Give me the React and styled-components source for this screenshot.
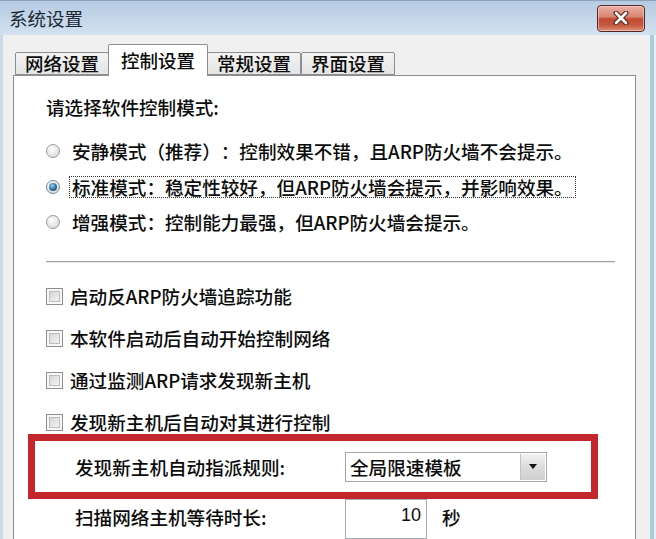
import React from 'react';
import styled, { createGlobalStyle } from 'styled-components';

const GlobalStyle = createGlobalStyle`
  html, body { margin: 0; padding: 0; background: #ffffff; }
  body {
    font-family: "Liberation Sans Narrow", "Noto Sans CJK SC", "Noto Sans", sans-serif;
    color: #0c0c0c;
    text-spacing-trim: space-all;
  }
  * { box-sizing: border-box; }
`;

const Window = styled.div`
  width: 656px;
  height: 539px;
  overflow: hidden;
  display: flex;
  flex-direction: column;
`;

const TitleBar = styled.div`
  height: 35px;
  flex: none;
  display: flex;
  align-items: center;
  justify-content: space-between;
  padding: 0 11px 0 9px;
  background: linear-gradient(#b6cae2, #c6d7ea 55%, #d3e1f0);
  border-top: 1px solid #8da2bb;
`;

const Title = styled.span`
  font-size: 18.5px;
  line-height: 26px;
  color: #1b2733;
`;

const CloseButton = styled.div`
  width: 48px;
  height: 27px;
  border: 1px solid #4d2a28;
  border-radius: 4px;
  display: flex;
  align-items: center;
  justify-content: center;
  background: linear-gradient(#eab0a3 0%, #d98672 42%, #c24a33 52%, #c65a42 78%, #e0927a 100%);
  box-shadow: inset 0 0 0 1px rgba(255, 220, 210, 0.55);
`;

const Body = styled.div`
  flex: 1;
  display: flex;
  min-height: 0;
`;

const FrameLeft = styled.div`
  width: 3px;
  background: #cbd9ea;
`;

const FrameRight = styled.div`
  width: 6px;
  background: linear-gradient(to right, #a7cedc 0 4px, #e6f1f6 4px);
`;

const Client = styled.div`
  flex: 1;
  display: flex;
  flex-direction: column;
  background: #f0f0f0;
  padding: 0 14px 0 10px;
  min-height: 0;
`;

const TabStrip = styled.div`
  height: 40px;
  flex: none;
  display: flex;
  align-items: flex-end;
  padding-left: 2px;
  position: relative;
  z-index: 2;
`;

const Tab = styled.div`
  height: ${(p) => (p.$active ? '32px' : '23px')};
  margin: ${(p) => (p.$active ? '0 -1px -1px -1px' : '0')};
  padding: ${(p) => (p.$active ? '0 12px' : '0 9px')};
  border: 1px solid #8c8e94;
  border-bottom: ${(p) => (p.$active ? 'none' : '1px solid #8c8e94')};
  border-radius: 2px 2px 0 0;
  background: ${(p) => (p.$active ? '#ffffff' : 'linear-gradient(#f3f3f3, #e4e4e4)')};
  font-size: 18.5px;
  font-weight: 500;
  line-height: ${(p) => (p.$active ? '30px' : '21px')};
  white-space: nowrap;
  position: relative;
  z-index: ${(p) => (p.$active ? 2 : 1)};
`;

const Panel = styled.div`
  flex: 1;
  min-height: 0;
  overflow: hidden;
  background: #ffffff;
  border: 1px solid #8c8e94;
  border-bottom: none;
  padding: 16px 20px 0 32px;
  display: flex;
  flex-direction: column;
  font-size: 18.6px;
  font-weight: 500;
`;

const Heading = styled.div`
  line-height: 30px;
  margin-bottom: 11px;
  white-space: nowrap;
`;

const RadioRow = styled.div`
  height: 36px;
  display: flex;
  align-items: center;
`;

const RadioCircle = styled.span`
  width: 14px;
  height: 14px;
  flex: none;
  border-radius: 50%;
  border: 1px solid ${(p) => (p.$checked ? '#6f8aa3' : '#9a9a9a')};
  background: radial-gradient(circle at 40% 35%, #ffffff 0%, #e6e6e6 55%, #c9c9c9 100%);
  margin-right: 9px;
  display: flex;
  align-items: center;
  justify-content: center;
  &::after {
    content: '';
    display: ${(p) => (p.$checked ? 'block' : 'none')};
    width: 8px;
    height: 8px;
    border-radius: 50%;
    background: radial-gradient(circle at 40% 35%, #9fd0f0 0%, #2a6b9c 55%, #0f3a62 100%);
  }
`;

const OptionText = styled.span`
  line-height: 20px;
  padding: 0 2px;
  border: 1px dotted ${(p) => (p.$focused ? '#333' : 'transparent')};
  white-space: nowrap;
`;

const Separator = styled.div`
  margin-top: 21px;
  height: 2px;
  flex: none;
  border-top: 1px solid #a2a2a2;
  border-bottom: 1px solid #e6e6e6;
`;

const CheckList = styled.div`
  margin-top: 12px;
  display: flex;
  flex-direction: column;
`;

const CheckRow = styled.div`
  height: 42px;
  display: flex;
  align-items: center;
`;

const CheckBox = styled.span`
  width: 17px;
  height: 17px;
  flex: none;
  border: 1px solid #8e8f8f;
  background: linear-gradient(135deg, #cdcdcd, #eeeeee 70%, #f6f6f6);
  box-shadow: inset 0 0 0 2px #f8f8f8, inset 0 0 0 3px #b9bcc0;
  margin-right: 7px;
`;

const CheckText = styled.span`
  line-height: 24px;
  white-space: nowrap;
`;

const RuleBox = styled.div`
  position: relative;
  z-index: 1;
  margin: -9px 0 0 -18px;
  width: 570px;
  height: 65px;
  flex: none;
  border: 7px solid #c4262e;
  display: flex;
  align-items: center;
  padding-left: 40px;
`;

const SettingRow = styled.div`
  height: 40px;
  flex: none;
  display: flex;
  align-items: flex-start;
  padding-left: 29px;
`;

const FieldLabel = styled.span`
  width: 270px;
  flex: none;
  line-height: ${(p) => (p.$tall ? '36px' : '30px')};
  white-space: nowrap;
`;

const Select = styled.div`
  width: 202px;
  height: 30px;
  border: 1px solid #a3a6ab;
  background: #fff;
  display: flex;
`;

const SelectValue = styled.span`
  flex: 1;
  line-height: 28px;
  padding-left: 4px;
  white-space: nowrap;
`;

const SelectArrow = styled.span`
  width: 25px;
  flex: none;
  border-left: 1px solid #c3c3c3;
  margin: 1px;
  background: linear-gradient(#f2f2f2, #dcdcdc 50%, #cfcfcf);
  display: flex;
  align-items: center;
  justify-content: center;
  &::after {
    content: '';
    width: 0;
    height: 0;
    border-left: 4px solid transparent;
    border-right: 4px solid transparent;
    border-top: 5px solid #111;
  }
`;

const NumberBox = styled.div`
  width: 82px;
  height: 40px;
  flex: none;
  border: 1px solid #a5acb5;
  background: #fff;
  text-align: right;
  padding-right: 5px;
  font-family: "Liberation Sans", "Noto Sans", sans-serif;
  font-weight: 400;
  font-size: 18px;
  line-height: 30px;
`;

const Unit = styled.span`
  margin-left: 15px;
  line-height: 36px;
`;

const CloseIcon = () => (
  <svg width="18" height="14" viewBox="0 0 18 14">
    <path d="M4 2 L14 12 M14 2 L4 12" stroke="#5b2b22" strokeWidth="5" strokeLinecap="round" />
    <path d="M4 2 L14 12 M14 2 L4 12" stroke="#ffffff" strokeWidth="2.6" strokeLinecap="round" />
  </svg>
);

const tabs = ['网络设置', '控制设置', '常规设置', '界面设置'];

const radios = [
  { text: '安静模式（推荐）：控制效果不错，且ARP防火墙不会提示。' },
  { text: '标准模式：稳定性较好，但ARP防火墙会提示，并影响效果。', checked: true },
  { text: '增强模式：控制能力最强，但ARP防火墙会提示。' },
];

const checks = [
  '启动反ARP防火墙追踪功能',
  '本软件启动后自动开始控制网络',
  '通过监测ARP请求发现新主机',
  '发现新主机后自动对其进行控制',
];

export default function App() {
  return (
    <>
      <GlobalStyle />
      <Window>
        <TitleBar>
          <Title>系统设置</Title>
          <CloseButton>
            <CloseIcon />
          </CloseButton>
        </TitleBar>
        <Body>
          <FrameLeft />
          <Client>
            <TabStrip>
              {tabs.map((t, i) => (
                <Tab key={t} $active={i === 1}>
                  {t}
                </Tab>
              ))}
            </TabStrip>
            <Panel>
              <Heading>请选择软件控制模式:</Heading>
              {radios.map((r) => (
                <RadioRow key={r.text}>
                  <RadioCircle $checked={r.checked} />
                  <OptionText $focused={r.checked}>{r.text}</OptionText>
                </RadioRow>
              ))}
              <Separator />
              <CheckList>
                {checks.map((c) => (
                  <CheckRow key={c}>
                    <CheckBox />
                    <CheckText>{c}</CheckText>
                  </CheckRow>
                ))}
              </CheckList>
              <RuleBox>
                <FieldLabel>发现新主机自动指派规则:</FieldLabel>
                <Select>
                  <SelectValue>全局限速模板</SelectValue>
                  <SelectArrow />
                </Select>
              </RuleBox>
              <SettingRow>
                <FieldLabel $tall>扫描网络主机等待时长:</FieldLabel>
                <NumberBox>10</NumberBox>
                <Unit>秒</Unit>
              </SettingRow>
            </Panel>
          </Client>
          <FrameRight />
        </Body>
      </Window>
    </>
  );
}
